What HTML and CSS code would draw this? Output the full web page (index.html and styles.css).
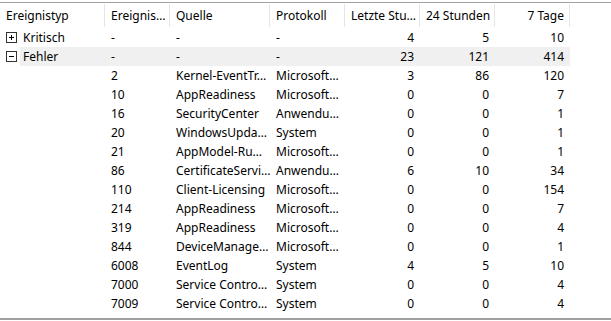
FILE: index.html
```html
<!DOCTYPE html>
<html>
<head>
    <title>Ereignisse</title>
    <link rel="stylesheet" href="styles.css">
</head>
<body>
    <div class="list">
        <table class="grid">
            <colgroup>
                <col class="c-type">
                <col class="c-id">
                <col class="c-src">
                <col class="c-log">
                <col class="c-num">
                <col class="c-num">
                <col class="c-num">
            </colgroup>
            <thead>
                <tr>
                    <th>Ereignistyp</th>
                    <th>Ereignis…</th>
                    <th>Quelle</th>
                    <th>Protokoll</th>
                    <th class="num">Letzte Stu…</th>
                    <th>24 Stunden</th>
                    <th class="num">7 Tage</th>
                </tr>
            </thead>
            <tbody>
                <tr class="group">
                    <td class="tree"><div class="node"><span class="toggle"><svg width="11" height="11" viewBox="0 0 11 11"><rect x="0.5" y="0.5" width="10" height="10" fill="none" stroke="#333"/><path d="M3 5.5h5M5.5 3v5" stroke="#000"/></svg></span><span class="label">Kritisch</span></div></td>
                    <td>-</td>
                    <td>-</td>
                    <td>-</td>
                    <td class="num">4</td>
                    <td class="num">5</td>
                    <td class="num">10</td>
                </tr>
                <tr class="group open">
                    <td class="tree"><div class="node"><span class="toggle"><svg width="11" height="11" viewBox="0 0 11 11"><rect x="0.5" y="0.5" width="10" height="10" fill="none" stroke="#333"/><path d="M3 5.5h5" stroke="#000"/></svg></span><span class="label">Fehler</span></div></td>
                    <td>-</td>
                    <td>-</td>
                    <td>-</td>
                    <td class="num">23</td>
                    <td class="num">121</td>
                    <td class="num">414</td>
                </tr>
                <tr><td></td><td>2</td><td>Kernel-EventTr…</td><td>Microsoft…</td><td class="num">3</td><td class="num">86</td><td class="num">120</td></tr>
                <tr><td></td><td>10</td><td>AppReadiness</td><td>Microsoft…</td><td class="num">0</td><td class="num">0</td><td class="num">7</td></tr>
                <tr><td></td><td>16</td><td>SecurityCenter</td><td>Anwendu…</td><td class="num">0</td><td class="num">0</td><td class="num">1</td></tr>
                <tr><td></td><td>20</td><td>WindowsUpda…</td><td>System</td><td class="num">0</td><td class="num">0</td><td class="num">1</td></tr>
                <tr><td></td><td>21</td><td>AppModel-Ru…</td><td>Microsoft…</td><td class="num">0</td><td class="num">0</td><td class="num">1</td></tr>
                <tr><td></td><td>86</td><td>CertificateServi…</td><td>Anwendu…</td><td class="num">6</td><td class="num">10</td><td class="num">34</td></tr>
                <tr><td></td><td>110</td><td>Client-Licensing</td><td>Microsoft…</td><td class="num">0</td><td class="num">0</td><td class="num">154</td></tr>
                <tr><td></td><td>214</td><td>AppReadiness</td><td>Microsoft…</td><td class="num">0</td><td class="num">0</td><td class="num">7</td></tr>
                <tr><td></td><td>319</td><td>AppReadiness</td><td>Microsoft…</td><td class="num">0</td><td class="num">0</td><td class="num">4</td></tr>
                <tr><td></td><td>844</td><td>DeviceManage…</td><td>Microsoft…</td><td class="num">0</td><td class="num">0</td><td class="num">1</td></tr>
                <tr><td></td><td>6008</td><td>EventLog</td><td>System</td><td class="num">4</td><td class="num">5</td><td class="num">10</td></tr>
                <tr><td></td><td>7000</td><td>Service Contro…</td><td>System</td><td class="num">0</td><td class="num">0</td><td class="num">4</td></tr>
                <tr><td></td><td>7009</td><td>Service Contro…</td><td>System</td><td class="num">0</td><td class="num">0</td><td class="num">4</td></tr>
            </tbody>
        </table>
    </div>
</body>
</html>
```

FILE: styles.css
```css
body {
    margin: 0;
    padding: 0;
    background: #fff;
    font-family: "Noto Sans", "Segoe UI", sans-serif;
    font-size: 12px;
    color: #000;
}

.list {
    margin-top: 2px;
    height: 315px;
    border-top: 1px solid #a0a0a0;
    border-bottom: 2px solid #a0a0a0;
    overflow: hidden;
}

.grid {
    width: 570px;
    table-layout: fixed;
    border-collapse: collapse;
}

.c-type { width: 105px; }
.c-id { width: 65px; }
.c-src { width: 100px; }
.c-log { width: 75px; }
.c-num { width: 75px; }

.grid th {
    height: 25px;
    padding: 0 2px 0 6px;
    font-weight: normal;
    text-align: left;
    white-space: nowrap;
    overflow: hidden;
    background: linear-gradient(#e5e5e5, #e5e5e5) no-repeat right 1px / 1px 23px;
}

.grid th.num {
    padding-right: 6px;
}

.grid td {
    height: 19px;
    padding: 0 6px;
    white-space: nowrap;
    overflow: hidden;
    line-height: 19px;
}

.grid .num {
    text-align: right;
}

.grid td.tree {
    padding: 0;
}

.node {
    display: flex;
    align-items: center;
    height: 19px;
}

.toggle {
    display: flex;
    width: 11px;
    height: 11px;
    margin: 0 3px 0 6px;
}

.label {
    flex: 1;
    padding-left: 3px;
    height: 19px;
}

.group.open td:not(.tree),
.group.open .label {
    background-color: #f0f0f0;
}
```
